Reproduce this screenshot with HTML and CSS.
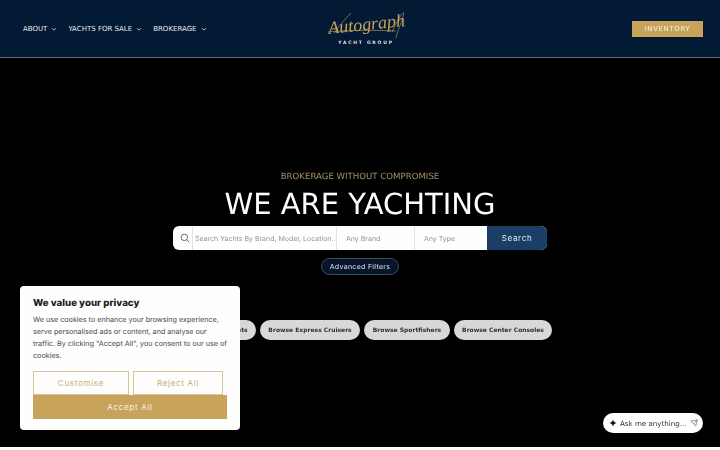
FILE: index.html
```html
<!DOCTYPE html>
<html lang="en">
  <head>
    <meta charset="UTF-8" />
    <meta name="viewport" content="width=device-width, initial-scale=1.0" />
    <title>Autograph Yacht Group</title>
    <link rel="stylesheet" href="styles.css">
  </head>
  <body>
    <header class="site-header">
      <nav class="main-nav">
        <a href="#">ABOUT <svg class="caret" viewBox="0 0 8 8"><path d="M1.5 3l2.5 2.5L6.5 3"/></svg></a>
        <a href="#">YACHTS FOR SALE <svg class="caret" viewBox="0 0 8 8"><path d="M1.5 3l2.5 2.5L6.5 3"/></svg></a>
        <a href="#">BROKERAGE <svg class="caret" viewBox="0 0 8 8"><path d="M1.5 3l2.5 2.5L6.5 3"/></svg></a>
      </nav>
      <div class="logo">
        <div class="logo-script">Autograph</div>
        <svg class="logo-swash" viewBox="0 0 76 30"><path d="M0 21C20 19 48 19 68 20M6 22C12 14 18 7 23 2M64 21C68 12 74 1 75.5 2C76.5 5 71 15 68 27"/></svg>
        <div class="logo-sub">YACHT GROUP</div>
      </div>
      <a class="inventory-btn" href="#">INVENTORY</a>
    </header>

    <main class="hero">
      <p class="eyebrow">BROKERAGE WITHOUT COMPROMISE</p>
      <h1>WE ARE YACHTING</h1>
      <form class="search-bar">
        <span class="search-icon">
          <svg viewBox="0 0 12 12"><circle cx="5.2" cy="5.2" r="3.9"/><path d="M8.1 8.1L11 11"/></svg>
        </span>
        <span class="field field-main">Search Yachts By Brand, Model, Location...</span>
        <span class="field field-brand">Any Brand</span>
        <span class="field field-type">Any Type</span>
        <button class="search-btn" type="button">Search</button>
      </form>
      <a class="filters-btn" href="#">Advanced Filters</a>
      <div class="chips">
        <a class="chip chip-first" href="#">Browse Motor Yachts</a>
        <a class="chip chip-express" href="#">Browse Express Cruisers</a>
        <a class="chip chip-sport" href="#">Browse Sportfishers</a>
        <a class="chip chip-center" href="#">Browse Center Consoles</a>
      </div>
    </main>
    <div class="page-rest"></div>

    <aside class="cookie-box">
      <h2>We value your privacy</h2>
      <p>We use cookies to enhance your browsing experience, serve personalised ads or content, and analyse our traffic. By clicking "Accept All", you consent to our use of cookies.</p>
      <div class="cookie-actions">
        <button class="cookie-btn btn-custom" type="button">Customise</button>
        <button class="cookie-btn btn-reject" type="button">Reject All</button>
        <button class="cookie-btn btn-accept" type="button">Accept All</button>
      </div>
    </aside>

    <div class="chat-pill">
      <svg class="chat-star" viewBox="0 0 12 12"><path d="M6 0.5C6.6 3.9 8.1 5.4 11.5 6C8.1 6.6 6.6 8.1 6 11.5C5.4 8.1 3.9 6.6 0.5 6C3.9 5.4 5.4 3.9 6 0.5Z"/></svg>
      <span>Ask me anything...</span>
      <svg class="chat-send" viewBox="0 0 12 12"><path d="M1 3.2L11 1.2L8.6 10.6L5.6 7.2L1 3.2ZM5.6 7.2L11 1.2"/></svg>
    </div>
  </body>
</html>
```

FILE: styles.css
```css
html,
body {
  margin: 0;
  padding: 0;
}
body {
  width: 720px;
  height: 450px;
  overflow: hidden;
  background: #000;
  font-family: "DejaVu Sans", sans-serif;
  text-rendering: geometricPrecision;
  opacity: 0.999;
}
a {
  text-decoration: none;
}
.site-header {
  height: 58px;
  box-sizing: border-box;
  padding: 0 17px 0 23px;
  background: #041b36;
  border-bottom: 1px solid #6a6e74;
  display: grid;
  grid-template-columns: 1fr auto 1fr;
  align-items: center;
}
.main-nav {
  display: flex;
  gap: 11px;
  white-space: nowrap;
}
.main-nav a {
  color: #e6e9ee;
  font-size: 7px;
  display: flex;
  align-items: center;
  gap: 4px;
}
.caret {
  width: 6px;
  height: 6px;
  fill: none;
  stroke: #c9ced6;
  stroke-width: 1.2;
}
.logo {
  width: 76px;
  margin-left: 6px;
  display: flex;
  flex-direction: column;
  align-items: center;
  color: #c9a45c;
  position: relative;
}
.logo-script {
  font-family: "Liberation Serif", serif;
  font-style: italic;
  font-size: 18px;
  line-height: 26px;
  transform: rotate(-6deg);
}
.logo-swash {
  position: absolute;
  left: 0;
  top: 0;
  width: 76px;
  height: 30px;
  fill: none;
  stroke: #c9a45c;
  stroke-width: 0.6;
}
.logo-sub {
  color: #e6e3da;
  font-size: 4.6px;
  line-height: 6px;
  font-weight: bold;
  letter-spacing: 1.7px;
  margin-top: 4px;
}
.inventory-btn {
  justify-self: end;
  width: 71px;
  height: 16px;
  background: #c9a45c;
  color: #f7f3ea;
  font-size: 7px;
  letter-spacing: 0.6px;
  display: flex;
  align-items: center;
  justify-content: center;
}
.hero {
  height: 389px;
  display: flex;
  flex-direction: column;
  align-items: center;
  box-sizing: border-box;
  padding-top: 113px;
}
.eyebrow {
  margin: 0;
  color: #a8916f;
  font-size: 8.6px;
  line-height: 12px;
}
h1 {
  margin: 3px 0 0;
  color: #fff;
  font-size: 29px;
  font-weight: normal;
  line-height: 36px;
}
.search-bar {
  width: 374px;
  height: 24px;
  margin-top: 4px;
  display: flex;
  background: #fff;
  border-radius: 6px;
  overflow: hidden;
  font-family: "Inter", sans-serif;
  font-size: 7px;
}
.search-icon {
  width: 19px;
  display: flex;
  align-items: center;
  justify-content: flex-end;
  box-sizing: border-box;
}
.search-icon svg {
  width: 10px;
  height: 10px;
  margin-right: 2px;
  fill: none;
  stroke: #4a4f57;
  stroke-width: 1;
}
.field {
  display: flex;
  align-items: center;
  color: #8e949c;
  border-left: 1px solid #e4e4e4;
  box-sizing: border-box;
  padding-left: 9px;
  white-space: nowrap;
}
.field-main {
  width: 144px;
  padding-left: 2px;
}
.field-brand {
  width: 78px;
}
.field-type {
  width: 73px;
}
.search-btn {
  width: 60px;
  border: none;
  background: #1b3f66;
  color: #e8edf2;
  font-family: "Inter", sans-serif;
  font-size: 8px;
  letter-spacing: 0.7px;
  padding: 0;
}
.filters-btn {
  width: 78px;
  height: 17px;
  box-sizing: border-box;
  margin-top: 8px;
  border: 1px solid #3f4c5c;
  border-radius: 9px;
  background: #07162a;
  color: #e6e9ee;
  font-family: "Inter", sans-serif;
  font-size: 7px;
  letter-spacing: 0.3px;
  display: flex;
  align-items: center;
  justify-content: center;
}
.chips {
  display: flex;
  gap: 4px;
  margin-top: 45px;
}
.chip {
  height: 20px;
  box-sizing: border-box;
  border-radius: 10px;
  background: #d9d9d9;
  color: #2a3440;
  font-size: 6px;
  font-weight: bold;
  display: flex;
  align-items: center;
  justify-content: center;
  white-space: nowrap;
}
.chip-first {
  width: 88px;
}
.chip-express {
  width: 100px;
}
.chip-sport {
  width: 86px;
}
.chip-center {
  width: 98px;
}
.page-rest {
  height: 3px;
  background: #fff;
}
.cookie-box {
  position: absolute;
  left: 20px;
  top: 286px;
  width: 220px;
  height: 144px;
  box-sizing: border-box;
  padding: 11px 13px;
  background: #fff;
  border-radius: 4px;
  font-family: "Inter", sans-serif;
}
.cookie-box h2 {
  margin: 0;
  color: #1d1d1d;
  font-size: 9.7px;
  line-height: 13px;
  font-weight: 800;
}
.cookie-box p {
  margin: 4px -2px 0 0;
  color: #4a4a4a;
  font-size: 7.2px;
  line-height: 12px;
}
.cookie-actions {
  display: grid;
  grid-template-columns: 96px 90px;
  column-gap: 4px;
  margin-top: 9px;
}
.cookie-btn {
  height: 24px;
  box-sizing: border-box;
  padding: 0;
  border: 1px solid #d8c59c;
  background: #fff;
  color: #c9ad74;
  font-family: "Inter", sans-serif;
  font-size: 8px;
  letter-spacing: 0.7px;
}
.btn-accept {
  grid-column: 1 / 3;
  width: 194px;
  background: #c9a45c;
  border-color: #c9a45c;
  color: #f7f3ea;
}
.chat-pill {
  position: absolute;
  left: 603px;
  top: 413px;
  width: 100px;
  height: 20px;
  box-sizing: border-box;
  padding: 0 5px 0 6px;
  background: #fff;
  border-radius: 10px;
  display: flex;
  align-items: center;
  gap: 3px;
  color: #333;
  font-size: 7.1px;
  white-space: nowrap;
}
.chat-star {
  width: 8px;
  height: 8px;
  flex: none;
  fill: #111;
}
.chat-send {
  width: 8px;
  height: 8px;
  flex: none;
  margin-left: auto;
  fill: none;
  stroke: #444;
  stroke-width: 0.8;
}
```
